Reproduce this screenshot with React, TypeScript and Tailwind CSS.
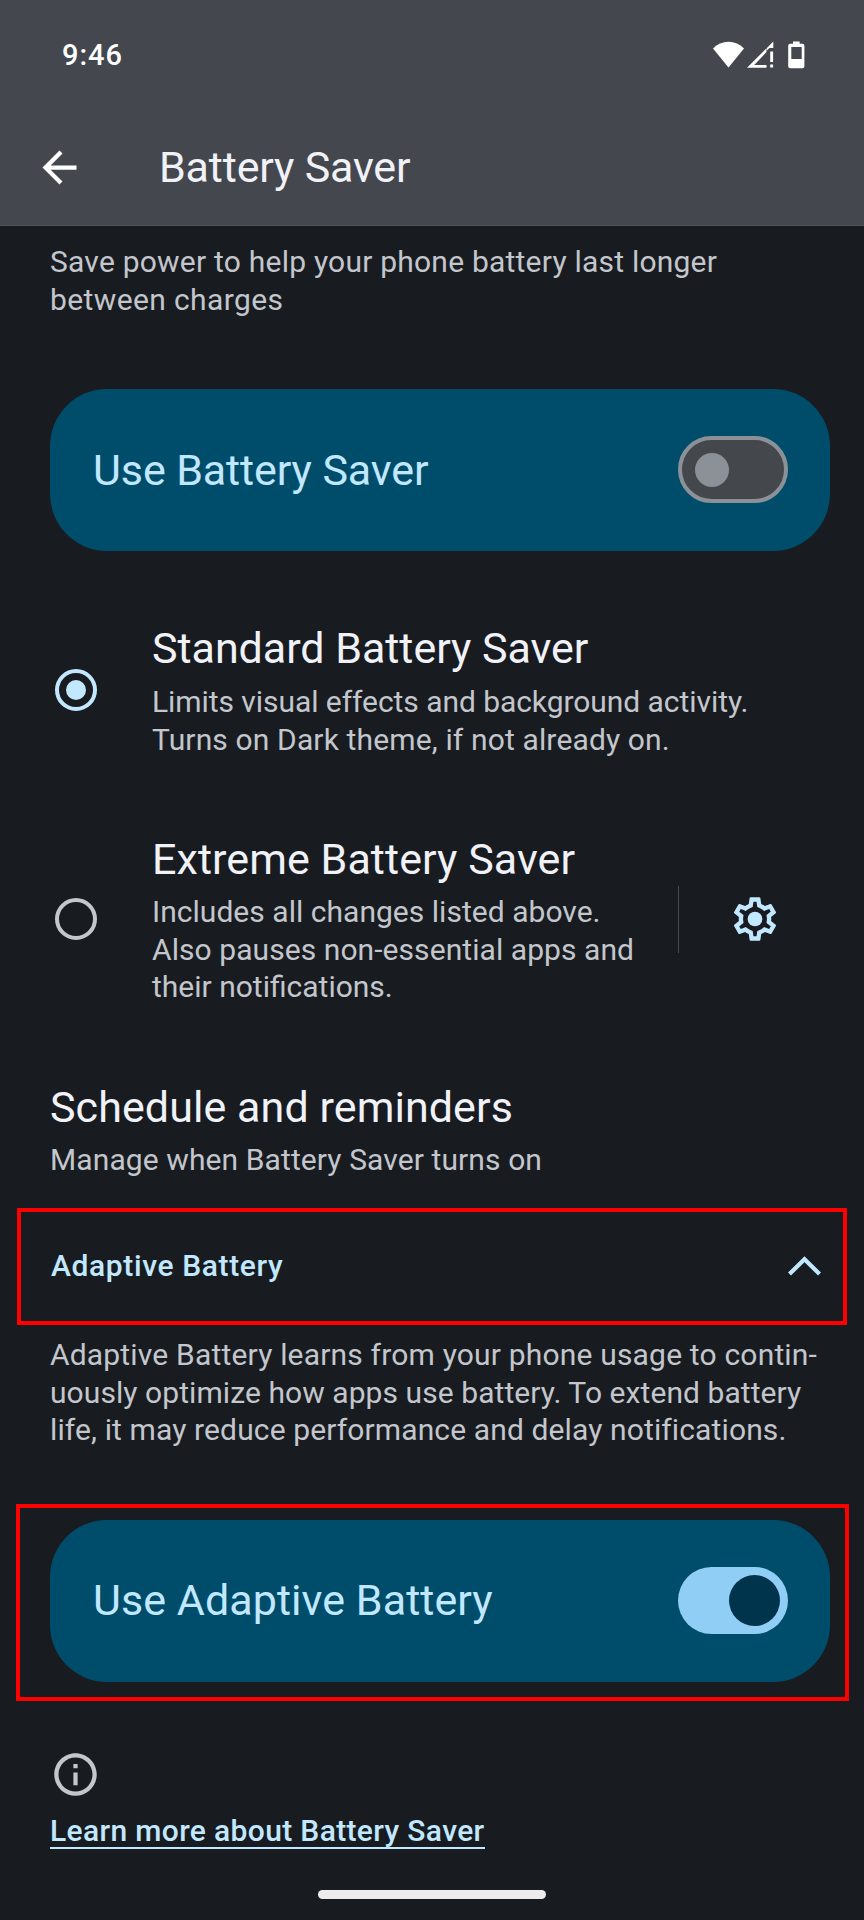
import type { ReactNode } from "react";
import { MdArrowBack, MdInfoOutline } from "react-icons/md";

function StatusIcons() {
  return (
    <svg width="92" height="28" viewBox="0 0 92 28" fill="#fff" aria-hidden="true">
      <path d="M0 7.4C4.2 3 9.6 0.8 15.5 0.8S26.8 3 31 7.4L15.5 26.6Z" />
      <path d="M34 26.8 53.5 7.3V11L41.2 24H53.5V26.8Z" />
      <path d="M53.9 6.9 60.3 0.5V7H56.5L53.9 9.6Z" />
      <path d="M57.2 10.5h2.9v10.6h-2.9zM57.2 23.6h2.9v3h-2.9z" />
      <path
        fillRule="evenodd"
        d="M80 0.6h6.6v2.2h2.8q2 0 2 2v20.4q0 2-2 2H77.2q-2 0-2-2V4.8q0-2 2-2H80ZM78.3 6v12h10.4V6Z"
      />
    </svg>
  );
}

function GearIcon() {
  return (
    <svg width="52" height="52" viewBox="0 0 24 24" fill="#c2e8ff" aria-hidden="true">
      <path d="M19.43 12.98c.04-.32.07-.64.07-.98 0-.34-.03-.66-.07-.98l2.11-1.65c.19-.15.24-.42.12-.64l-2-3.46c-.09-.16-.26-.25-.44-.25-.06 0-.12.01-.17.03l-2.49 1c-.52-.4-1.08-.73-1.69-.98l-.38-2.65C14.46 2.18 14.25 2 14 2h-4c-.25 0-.46.18-.49.42l-.38 2.65c-.61.25-1.17.59-1.69.98l-2.49-1c-.06-.02-.12-.03-.18-.03-.17 0-.34.09-.43.25l-2 3.46c-.13.22-.07.49.12.64l2.11 1.65c-.04.32-.07.65-.07.98 0 .33.03.66.07.98l-2.11 1.65c-.19.15-.24.42-.12.64l2 3.46c.09.16.26.25.44.25.06 0 .12-.01.17-.03l2.49-1c.52.4 1.08.73 1.69.98l.38 2.65c.03.24.24.42.49.42h4c.25 0 .46-.18.49-.42l.38-2.65c.61-.25 1.17-.59 1.69-.98l2.49 1c.06.02.12.03.18.03.17 0 .34-.09.43-.25l2-3.46c.12-.22.07-.49-.12-.64l-2.11-1.65zm-1.98-1.71c.04.31.05.52.05.73 0 .21-.02.43-.05.73l-.14 1.13.89.7 1.08.84-.7 1.21-1.27-.51-1.04-.42-.9.68c-.43.32-.84.56-1.25.73l-1.06.43-.16 1.13-.2 1.35h-1.4l-.19-1.35-.16-1.13-1.06-.43c-.43-.18-.83-.41-1.23-.71l-.91-.7-1.06.43-1.27.51-.7-1.21 1.08-.84.89-.7-.14-1.13c-.03-.31-.05-.54-.05-.74s.02-.43.05-.73l.14-1.13-.89-.7-1.08-.84.7-1.21 1.27.51 1.04.42.9-.68c.43-.32.84-.56 1.25-.73l1.06-.43.16-1.13.2-1.35h1.39l.19 1.35.16 1.13 1.06.43c.43.18.83.41 1.23.71l.91.7 1.06-.43 1.27-.51.7 1.21-1.07.85-.89.7.14 1.13z" />
      <circle cx="12" cy="12" r="3.4" />
    </svg>
  );
}

function Line({ className = "", children }: { className?: string; children: ReactNode }) {
  return <span className={`block whitespace-nowrap ${className}`}>{children}</span>;
}

function Title({ className = "", children }: { className?: string; children: ReactNode }) {
  return (
    <h2 className={`text-[43px] leading-[50px] whitespace-nowrap text-[#f0f2f8] ${className}`}>{children}</h2>
  );
}

function Body({ className = "", children }: { className?: string; children: ReactNode }) {
  return <p className={`text-[30px] leading-[37.5px] text-[#c3c6cc] ${className}`}>{children}</p>;
}

function Toggle({ on }: { on: boolean }) {
  return on ? (
    <span className="flex h-[67px] w-[110px] items-center justify-end rounded-full bg-[#91cef5] pr-2">
      <span className="size-[51px] rounded-full bg-[#00344c]" />
    </span>
  ) : (
    <span className="mb-px flex h-[67px] w-[110px] items-center rounded-full border-4 border-[#8c9198] bg-[#44474b] pl-[13px]">
      <span className="size-[34px] rounded-full bg-[#8c9198]" />
    </span>
  );
}

function SwitchCard({ label, on, className }: { label: string; on: boolean; className: string }) {
  return (
    <div className="flex h-[162px] w-[780px] items-center justify-between rounded-[57px] bg-[#004d6b] pr-[42px] pl-[43px]">
      <span className={`pb-px text-[43px] leading-[50px] whitespace-nowrap text-[#c2e8ff] ${className}`}>{label}</span>
      <Toggle on={on} />
    </div>
  );
}

function Radio({ checked }: { checked: boolean }) {
  return (
    <span
      className={`flex size-[42px] shrink-0 items-center justify-center rounded-full border-4 ${
        checked ? "border-[#c2e8ff]" : "border-[#c3c6cc]"
      }`}
    >
      {checked && <span className="size-5 rounded-full bg-[#c2e8ff]" />}
    </span>
  );
}

export default function App() {
  return (
    <div className="flex h-[1920px] w-[864px] flex-col overflow-hidden bg-[#181c20] font-['Roboto','Noto_Sans',sans-serif]">
      <header className="flex h-[226px] flex-col border-b border-[#505358] bg-[#44474e]">
        <div className="flex h-[110px] items-center justify-between pr-[59px] pl-[62px]">
          <span className="pt-0.5 text-[29px] font-medium tracking-[0.96px] text-white">9:46</span>
          <StatusIcons />
        </div>
        <div className="flex h-[114px] items-center pl-[34px]">
          <MdArrowBack size={51} color="#fff" />
          <h1 className="ml-[74px] text-[43px] leading-[50px] tracking-[-0.17px] text-[#f0f2f8]">Battery Saver</h1>
        </div>
      </header>

      <main className="flex flex-col">
        <Body className="mt-[17px] ml-[50px]">
          <Line className="tracking-[0.22px]">Save power to help your phone battery last longer</Line>
          <Line className="tracking-[0.38px]">between charges</Line>
        </Body>

        <div className="mt-[71px] ml-[50px]">
          <SwitchCard label="Use Battery Saver" on={false} className="tracking-[-0.1px]" />
        </div>

        <section className="mt-[72px] flex items-center pl-[55px]">
          <div className="pb-0.5">
            <Radio checked />
          </div>
          <div className="ml-[55px]">
            <Title className="tracking-[-0.03px]">Standard Battery Saver</Title>
            <Body className="mt-[10px]">
              <Line className="tracking-[-0.06px]">Limits visual effects and background activity.</Line>
              <Line className="tracking-[0.14px]">Turns on Dark theme, if not already on.</Line>
            </Body>
          </div>
        </section>

        <section className="mt-[76px] flex items-center pl-[55px]">
          <div className="pb-px">
            <Radio checked={false} />
          </div>
          <div className="ml-[55px] w-[526px]">
            <Title className="tracking-[0.07px]">Extreme Battery Saver</Title>
            <Body className="mt-[9px]">
              <Line className="tracking-[0.03px]">Includes all changes listed above.</Line>
              <Line className="tracking-[0.07px]">Also pauses non-essential apps and</Line>
              <Line>their notifications.</Line>
            </Body>
          </div>
          <div className="h-[67px] w-px bg-[#484b50]" />
          <div className="ml-[50px] pb-0.5">
            <GearIcon />
          </div>
        </section>

        <section className="mt-[76px] ml-[50px]">
          <Title className="tracking-[0.08px]">Schedule and reminders</Title>
          <Body className="mt-[9px] tracking-[0.1px]">Manage when Battery Saver turns on</Body>
        </section>

        <div className="mt-[30px] ml-[17px] flex h-[117px] w-[830px] items-center justify-between border-4 border-[#fe0000] pr-5 pl-[30px]">
          <span className="pb-0.5 text-[30px] font-medium tracking-[0.62px] text-[#c2e8ff]">Adaptive Battery</span>
          <svg width="38" height="24" viewBox="0 0 38 24" fill="none" stroke="#c2e8ff" strokeWidth="4.2" aria-hidden="true">
            <path d="M4.5 19 19.5 4.3 34.5 19" />
          </svg>
        </div>

        <Body className="mt-[11px] ml-[50px]">
          <Line className="tracking-[0.18px]">Adaptive Battery learns from your phone usage to contin-</Line>
          <Line className="tracking-[0.07px]">uously optimize how apps use battery. To extend battery</Line>
          <Line className="tracking-[0.12px]">life, it may reduce performance and delay notifications.</Line>
        </Body>

        <div className="mt-[55px] ml-[16px] h-[197px] w-[833px] border-4 border-[#fe0000] pt-[12px] pl-[30px]">
          <SwitchCard label="Use Adaptive Battery" on className="tracking-[0.07px]" />
        </div>

        <footer className="mt-[48px] ml-[50px] flex flex-col items-start">
          <MdInfoOutline size={51} color="#c3c6cc" />
          <a className="mt-3 h-[37px] border-b-[2.5px] border-[#c2e8ff] text-[30px] leading-[37.5px] font-medium tracking-[0.35px] whitespace-nowrap text-[#c2e8ff]">
            Learn more about Battery Saver
          </a>
        </footer>
      </main>

      <div className="mt-auto mb-[21px] ml-[318px] h-[9px] w-[228px] rounded-full bg-[#ececec]" />
    </div>
  );
}
